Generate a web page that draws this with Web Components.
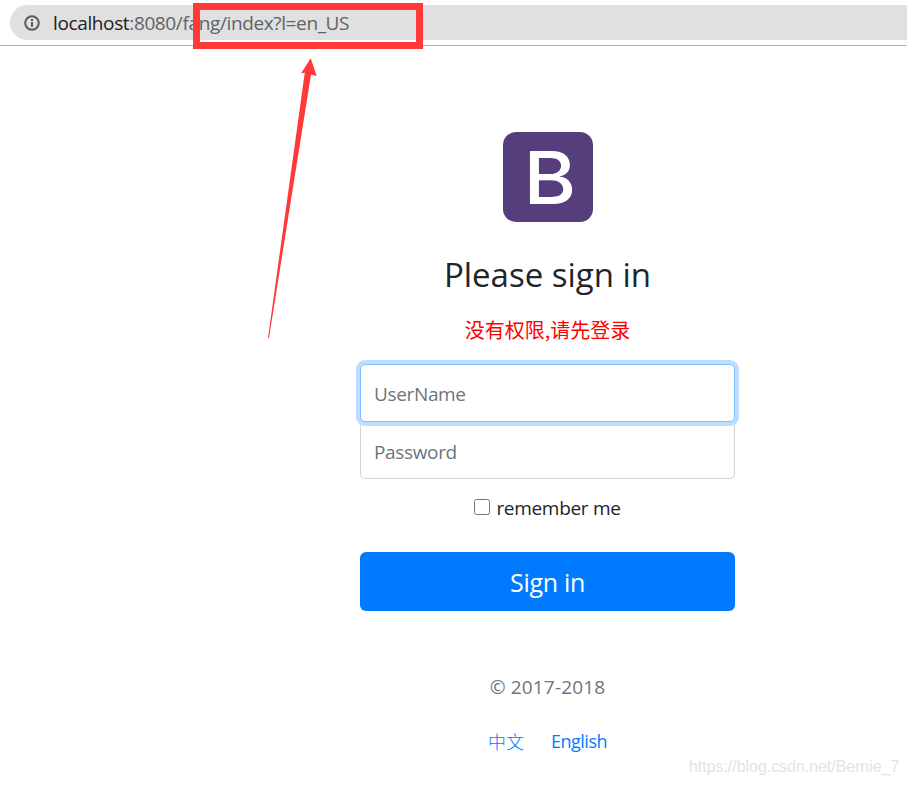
<!DOCTYPE html>
<html lang="en">
<head>
<meta charset="utf-8">
<title>Please sign in</title>
<style>
    html, body { margin: 0; padding: 0; background: #fff; }
    body { position: relative; width: 907px; height: 785px; overflow: hidden; font-family: "Open Sans", "Noto Sans CJK SC", sans-serif; }
    #mark { position: absolute; left: 689px; top: 756px; font: 15.9px/22px "Liberation Sans", sans-serif; color: #e3e3e3; white-space: nowrap; }
    b[slot="host"] { font-weight: 400; color: #202124; }
</style>
</head>
<body>
<browser-bar><b slot="host">localhost</b>:8080/fang/index?l=en_US</browser-bar>
<login-page>
    <span slot="title">Please sign in</span>
    <span slot="error">没有权限,请先登录</span>
    <form-field slot="user" focused>UserName</form-field>
    <form-field slot="pass">Password</form-field>
    <span slot="remember">remember me</span>
    <span slot="submit">Sign in</span>
    <span slot="copy">© 2017-2018</span>
</login-page>
<red-callout></red-callout>
<span id="mark">https://blog.csdn.net/Bernie_7</span>

<script>
// адресная строка браузера
class BrowserBar extends HTMLElement {
    constructor() {
        super();
        this.attachShadow({ mode: 'open' });
        this.shadowRoot.innerHTML = `
            <style>
                :host { display: block; height: 46px; box-sizing: border-box; padding: 5px 0 0 10px; border-bottom: 1px solid #b4b4b4; }
                .pill {
                    display: flex; align-items: center; height: 35px; padding-left: 14px; gap: 13px;
                    background: #e0e0e0; border-radius: 18px 0 0 18px;
                    font-size: 19px; letter-spacing: -0.37px; color: #5f6368; white-space: nowrap;
                }
                svg { flex: none; display: block; }
            </style>
            <div class="pill">
                <svg width="16" height="16" viewBox="0 0 16 16">
                    <circle cx="8" cy="8" r="6.8" fill="none" stroke="#5a5a5a" stroke-width="2"/>
                    <rect x="7" y="7" width="2" height="4.8" fill="#5a5a5a"/>
                    <rect x="7" y="4" width="2" height="2" fill="#5a5a5a"/>
                </svg>
                <span><slot name="host"></slot><slot></slot></span>
            </div>
        `;
    }
}

class FormField extends HTMLElement {
    constructor() {
        super();
        this.attachShadow({ mode: 'open' });
        this.shadowRoot.innerHTML = `
            <style>
                :host {
                    display: flex; align-items: center; position: relative; box-sizing: border-box;
                    height: 58px; padding: 2px 13px 0; background: #fff; color: #6c757d;
                    font-size: 19px; letter-spacing: -0.35px;
                    border: 1px solid #ced4da; border-radius: 5px;
                }
                :host([focused]) { z-index: 1; border-color: #80bdff; box-shadow: 0 0 0 4px #bfdeff; }
            </style>
            <slot></slot>
        `;
    }
}

class LoginPage extends HTMLElement {
    constructor() {
        super();
        this.attachShadow({ mode: 'open' });
        this.shadowRoot.innerHTML = `
            <style>
                :host { display: block; width: 375px; margin-left: 360px; text-align: center; color: #212529; }
                .logo {
                    display: flex; align-items: center; justify-content: center;
                    width: 90px; height: 90px; margin: 86px auto 0; border-radius: 13px;
                    background: #563d7c; color: #fff;
                    font: 500 73px/90px Inter, sans-serif;
                }
                .logo span { display: block; transform: translate(2px, 1px) scaleX(1.1); }
                h1 { margin: 31px 0 0; font-size: 33px; line-height: 44px; font-weight: 400; }
                .err { margin-top: 19px; height: 28px; font: 20px/28px "Noto Sans CJK SC", sans-serif; color: #f00; }
                .fields { display: flex; flex-direction: column; margin-top: 20px; }
                .fields ::slotted([slot="pass"]) { margin-top: -1px; padding-top: 4px; }
                .check { display: flex; justify-content: center; align-items: center; gap: 6px; margin-top: 14px; height: 29px; font-size: 19px; letter-spacing: -0.3px; }
                .check input { width: 16px; height: 16px; margin: 0 0 2px; accent-color: #007bff; }
                button {
                    display: block; width: 100%; height: 59px; margin-top: 30px; padding: 0; border: 0; border-radius: 6px;
                    background: #007bff; color: #fff; font: 25px "Open Sans", sans-serif; letter-spacing: -0.3px;
                }
                .copy { margin-top: 62px; height: 28px; line-height: 28px; font-size: 19px; letter-spacing: 0.15px; color: #6c757d; }
                .langs { display: flex; justify-content: center; align-items: center; gap: 27px; margin-top: 26px; height: 28px; color: #007bff; font-size: 18px; letter-spacing: -0.5px; }
                .langs a { color: inherit; text-decoration: none; }
                .langs .zh { font-family: "Noto Sans CJK SC", sans-serif; font-weight: 300; letter-spacing: 0; }
            </style>
            <div class="logo"><span>B</span></div>
            <h1><slot name="title"></slot></h1>
            <div class="err"><slot name="error"></slot></div>
            <div class="fields">
                <slot name="user"></slot>
                <slot name="pass"></slot>
            </div>
            <label class="check"><input type="checkbox"><slot name="remember"></slot></label>
            <button type="button"><slot name="submit"></slot></button>
            <div class="copy"><slot name="copy"></slot></div>
            <div class="langs"><a class="zh" href="#">中文</a><a href="#">English</a></div>
        `;
    }
}

// красная разметка поверх скриншота: рамка и стрелка
class RedCallout extends HTMLElement {
    constructor() {
        super();
        this.attachShadow({ mode: 'open' });
        this.shadowRoot.innerHTML = `
            <style>
                :host { position: absolute; left: 0; top: 0; width: 907px; height: 785px; pointer-events: none; }
                svg { display: block; }
            </style>
            <svg width="907" height="785" viewBox="0 0 907 785">
                <rect x="196.5" y="6.5" width="223" height="39" fill="none" stroke="#ff3838" stroke-width="7"/>
                <polygon fill="#ff3838" points="310.7,58.3 316.7,76 311,74.5 269,338 268,338 304.8,72.5 301,73.5"/>
            </svg>
        `;
    }
}

customElements.define('browser-bar', BrowserBar);
customElements.define('form-field', FormField);
customElements.define('login-page', LoginPage);
customElements.define('red-callout', RedCallout);
</script>
</body>
</html>
